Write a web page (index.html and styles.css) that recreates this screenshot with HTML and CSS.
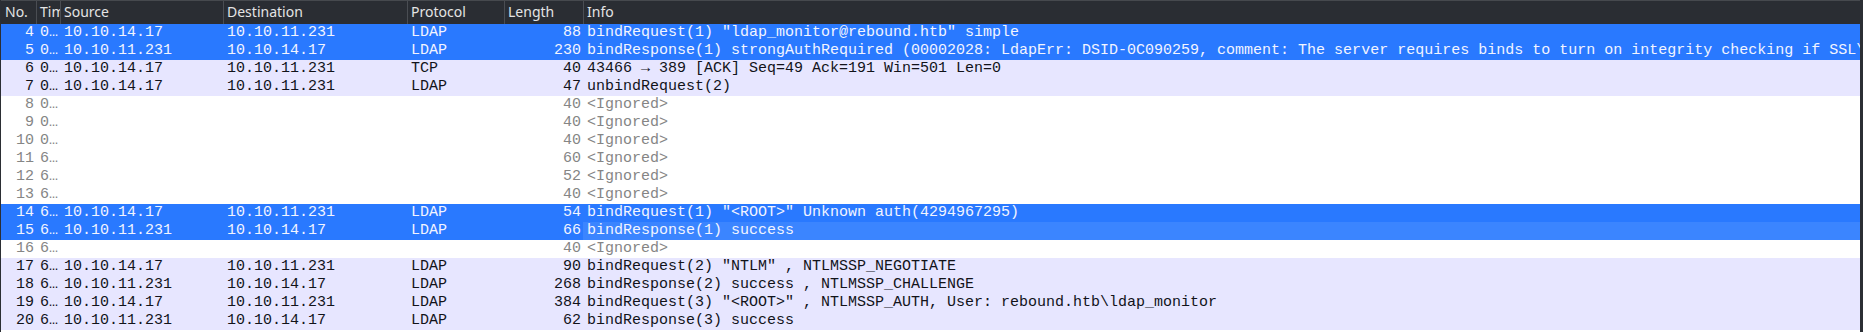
FILE: index.html
```html
<!DOCTYPE html>
<html lang="en">
  <head>
    <meta charset="UTF-8" />
    <title>Packet List</title>
    <link rel="stylesheet" href="styles.css">
  </head>
  <body>
    <div class="packet-list">
      <div class="row header">
        <div class="col">No.</div>
        <div class="col">Time</div>
        <div class="col">Source</div>
        <div class="col">Destination</div>
        <div class="col">Protocol</div>
        <div class="col">Length</div>
        <div class="col">Info</div>
      </div>

      <div class="row selected">
        <div class="col num">4</div><div class="col">0…</div>
        <div class="col">10.10.14.17</div><div class="col">10.10.11.231</div>
        <div class="col">LDAP</div><div class="col num">88</div>
        <div class="col info">bindRequest(1) "ldap_monitor@rebound.htb" simple</div>
      </div>
      <div class="row selected">
        <div class="col num">5</div><div class="col">0…</div>
        <div class="col">10.10.11.231</div><div class="col">10.10.14.17</div>
        <div class="col">LDAP</div><div class="col num">230</div>
        <div class="col info">bindResponse(1) strongAuthRequired (00002028: LdapErr: DSID-0C090259, comment: The server requires binds to turn on integrity checking if SSL\TLS are not already active on the connection, data 0, v4563)</div>
      </div>
      <div class="row tcp">
        <div class="col num">6</div><div class="col">0…</div>
        <div class="col">10.10.14.17</div><div class="col">10.10.11.231</div>
        <div class="col">TCP</div><div class="col num">40</div>
        <div class="col info">43466 → 389 [ACK] Seq=49 Ack=191 Win=501 Len=0</div>
      </div>
      <div class="row tcp">
        <div class="col num">7</div><div class="col">0…</div>
        <div class="col">10.10.14.17</div><div class="col">10.10.11.231</div>
        <div class="col">LDAP</div><div class="col num">47</div>
        <div class="col info">unbindRequest(2)</div>
      </div>
      <div class="row ignored">
        <div class="col num">8</div><div class="col">0…</div>
        <div class="col"></div><div class="col"></div>
        <div class="col"></div><div class="col num">40</div>
        <div class="col info">&lt;Ignored&gt;</div>
      </div>
      <div class="row ignored">
        <div class="col num">9</div><div class="col">0…</div>
        <div class="col"></div><div class="col"></div>
        <div class="col"></div><div class="col num">40</div>
        <div class="col info">&lt;Ignored&gt;</div>
      </div>
      <div class="row ignored">
        <div class="col num">10</div><div class="col">0…</div>
        <div class="col"></div><div class="col"></div>
        <div class="col"></div><div class="col num">40</div>
        <div class="col info">&lt;Ignored&gt;</div>
      </div>
      <div class="row ignored">
        <div class="col num">11</div><div class="col">6…</div>
        <div class="col"></div><div class="col"></div>
        <div class="col"></div><div class="col num">60</div>
        <div class="col info">&lt;Ignored&gt;</div>
      </div>
      <div class="row ignored">
        <div class="col num">12</div><div class="col">6…</div>
        <div class="col"></div><div class="col"></div>
        <div class="col"></div><div class="col num">52</div>
        <div class="col info">&lt;Ignored&gt;</div>
      </div>
      <div class="row ignored">
        <div class="col num">13</div><div class="col">6…</div>
        <div class="col"></div><div class="col"></div>
        <div class="col"></div><div class="col num">40</div>
        <div class="col info">&lt;Ignored&gt;</div>
      </div>
      <div class="row selected">
        <div class="col num">14</div><div class="col">6…</div>
        <div class="col">10.10.14.17</div><div class="col">10.10.11.231</div>
        <div class="col">LDAP</div><div class="col num">54</div>
        <div class="col info">bindRequest(1) "&lt;ROOT&gt;" Unknown auth(4294967295)</div>
      </div>
      <div class="row selected">
        <div class="col num">15</div><div class="col">6…</div>
        <div class="col">10.10.11.231</div><div class="col">10.10.14.17</div>
        <div class="col">LDAP</div><div class="col num">66</div>
        <div class="col info focus">bindResponse(1) success</div>
      </div>
      <div class="row ignored">
        <div class="col num">16</div><div class="col">6…</div>
        <div class="col"></div><div class="col"></div>
        <div class="col"></div><div class="col num">40</div>
        <div class="col info">&lt;Ignored&gt;</div>
      </div>
      <div class="row tcp">
        <div class="col num">17</div><div class="col">6…</div>
        <div class="col">10.10.14.17</div><div class="col">10.10.11.231</div>
        <div class="col">LDAP</div><div class="col num">90</div>
        <div class="col info">bindRequest(2) "NTLM" , NTLMSSP_NEGOTIATE</div>
      </div>
      <div class="row tcp">
        <div class="col num">18</div><div class="col">6…</div>
        <div class="col">10.10.11.231</div><div class="col">10.10.14.17</div>
        <div class="col">LDAP</div><div class="col num">268</div>
        <div class="col info">bindResponse(2) success , NTLMSSP_CHALLENGE</div>
      </div>
      <div class="row tcp">
        <div class="col num">19</div><div class="col">6…</div>
        <div class="col">10.10.14.17</div><div class="col">10.10.11.231</div>
        <div class="col">LDAP</div><div class="col num">384</div>
        <div class="col info">bindRequest(3) "&lt;ROOT&gt;" , NTLMSSP_AUTH, User: rebound.htb\ldap_monitor</div>
      </div>
      <div class="row tcp">
        <div class="col num">20</div><div class="col">6…</div>
        <div class="col">10.10.11.231</div><div class="col">10.10.14.17</div>
        <div class="col">LDAP</div><div class="col num">62</div>
        <div class="col info">bindResponse(3) success</div>
      </div>
    </div>
  </body>
</html>
```
FILE: styles.css
```css
:root {
  --frame: #2b2e34;
  --header-bg: #2a2d33;
  --header-line: #4a4d53;
  --selected: #2979ff;
  --focus: #3b85ff;
  --tcp: #e7e6ff;
  --ignored-text: #858585;
}

* {
  box-sizing: border-box;
  margin: 0;
  padding: 0;
}

body {
  background: #fff;
  width: 1863px;
  height: 332px;
  overflow: hidden;
}

.packet-list {
  height: 332px;
  border-left: 1px solid var(--frame);
  border-right: 3px solid var(--frame);
  overflow: hidden;
}

.row {
  display: grid;
  grid-template-columns: 35px 24px 163px 184px 97px 79px 1fr;
  height: 18px;
  font-family: "Liberation Mono", monospace;
  font-size: 15px;
  line-height: 18px;
  color: #12131a;
}

.col {
  padding: 0 3px 0 4px;
  white-space: nowrap;
  overflow: hidden;
}

.col.num {
  text-align: right;
  padding: 0 2px 0 0;
}

.col.info {
  overflow: visible;
}

.header {
  height: 24px;
  background: var(--header-bg);
  border-top: 1px solid #46494e;
  font-family: "Noto Sans", sans-serif;
  font-size: 14px;
  line-height: 22px;
  color: #e4e4e4;
}

.header .col {
  border-left: 1px solid var(--header-line);
  padding-left: 3px;
}

.header .col:first-child {
  border-left: none;
  padding-left: 4px;
}

.selected {
  background: var(--selected);
  color: #f2f4ff;
}

.selected .focus {
  background: var(--focus);
}

.tcp {
  background: var(--tcp);
}

.ignored {
  background: #fff;
  color: var(--ignored-text);
}
```
